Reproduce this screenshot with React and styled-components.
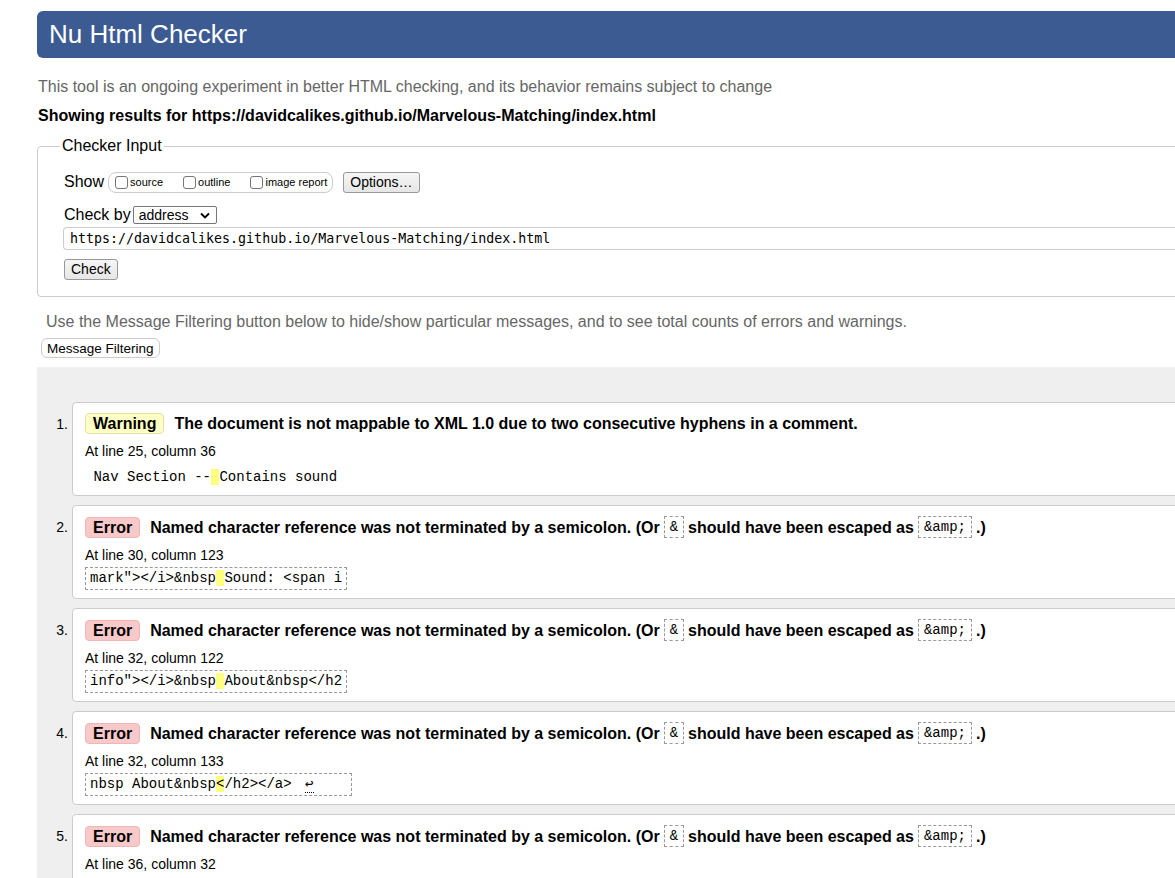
import React from "react";
import styled, { createGlobalStyle } from "styled-components";

const GlobalStyle = createGlobalStyle`
  html, body {
    margin: 0;
    padding: 0;
    background: #ffffff;
    overflow: hidden;
  }
  body {
    font-family: "Liberation Sans", Arial, sans-serif;
    color: #000000;
  }
`;

const Page = styled.div`
  width: 1320px;
  padding: 11px 0 0 37px;
  box-sizing: border-box;
`;

const Header = styled.h1`
  margin: 0;
  height: 47px;
  background: #3d5b93;
  border-radius: 6px;
  color: #ffffff;
  font-size: 26px;
  font-weight: normal;
  line-height: 47px;
  padding-left: 12px;
`;

const Intro = styled.p`
  margin: 19px 0 0 1px;
  font-size: 16px;
  line-height: 19px;
  color: #666666;
`;

const Results = styled.p`
  margin: 10px 0 0 1px;
  font-size: 16px;
  line-height: 19px;
  font-weight: bold;
`;

const Fieldset = styled.fieldset`
  margin: 12px 0 0 0;
  border: 1px solid #cccccc;
  border-radius: 4px;
  padding: 12px 0 15px 26px;
  height: 160px;
  box-sizing: border-box;
`;

const Legend = styled.legend`
  font-size: 16px;
  padding: 0 2px;
  margin-left: -4px;
  line-height: 18px;
`;

const FormRow = styled.div`
  display: flex;
  align-items: center;
  height: ${(p) => p.$h || 22}px;
  margin-top: ${(p) => p.$mt || 0}px;
`;

const Label = styled.span`
  font-size: 16px;
  margin-right: ${(p) => p.$mr || 4}px;
`;

const ShowGroup = styled.div`
  display: flex;
  align-items: center;
  height: 19px;
  border: 1px solid #cccccc;
  border-radius: 8px;
  padding: 0 5px 0 6px;
  margin-right: 10px;
`;

const CheckItem = styled.label`
  display: flex;
  align-items: center;
  font-size: 11px;
  margin-right: ${(p) => p.$mr || 0}px;
`;

const Box = styled.span`
  display: inline-block;
  width: 13px;
  height: 13px;
  box-sizing: border-box;
  border: 1px solid #767676;
  border-radius: 3px;
  margin-right: 2px;
  background: #ffffff;
`;

const Button = styled.button`
  font-family: "Liberation Sans", Arial, sans-serif;
  font-size: ${(p) => p.$fs || 14}px;
  height: ${(p) => p.$h || 21}px;
  padding: 0 ${(p) => p.$px || 6}px;
  border: 1px solid ${(p) => (p.$round ? "#cccccc" : "#999999")};
  border-radius: ${(p) => (p.$round ? 6 : 3)}px;
  background: ${(p) => (p.$round ? "#ffffff" : "linear-gradient(#f6f6f6, #e6e6e6)")};
  color: #000000;
`;

const Select = styled.div`
  display: flex;
  align-items: center;
  justify-content: space-between;
  width: 84px;
  height: 18px;
  box-sizing: border-box;
  border: 1px solid #767676;
  border-radius: 2px;
  padding: 0 6px 0 5px;
  font-size: 14px;
`;

const UrlInput = styled.div`
  flex: 1;
  height: 23px;
  box-sizing: border-box;
  border: 1px solid #cccccc;
  border-right: none;
  border-radius: 4px 0 0 4px;
  margin-left: -1px;
  padding-left: 6px;
  font-family: "DejaVu Sans Mono", monospace;
  font-size: 13.3px;
  line-height: 21px;
`;

const FilterNote = styled.p`
  margin: 15px 0 0 9px;
  font-size: 16px;
  line-height: 19px;
  color: #666666;
`;

const FilterRow = styled.div`
  margin: 7px 0 0 4px;
  display: flex;
`;

const ResultsArea = styled.div`
  margin-top: 9px;
  background: #efefef;
  padding: 35px 0 0 0;
  height: 511px;
  box-sizing: border-box;
  overflow: hidden;
`;

const List = styled.ol`
  list-style: none;
  margin: 0;
  padding: 0;
`;

const Item = styled.li`
  display: flex;
  margin-bottom: 9px;
`;

const Num = styled.span`
  width: 31px;
  flex-shrink: 0;
  text-align: right;
  font-size: 14px;
  padding-top: 14px;
  padding-right: 4px;
`;

const Card = styled.div`
  flex: 1;
  height: 94px;
  box-sizing: border-box;
  background: #ffffff;
  border: 1px solid #cccccc;
  border-radius: 4px;
  padding: 10px 0 0 12px;
`;

const MessageLine = styled.p`
  margin: 0;
  display: flex;
  align-items: center;
  font-size: 16px;
  font-weight: bold;
  line-height: 21px;
  white-space: nowrap;
`;

const Badge = styled.strong`
  display: inline-block;
  height: 21px;
  box-sizing: border-box;
  line-height: 19px;
  padding: 0 7px;
  margin-right: 10px;
  border-radius: 4px;
  border: 1px solid ${(p) => (p.$kind === "warning" ? "#e6e0a6" : "#eeb6b6")};
  background: ${(p) => (p.$kind === "warning" ? "#ffffc5" : "#f8c9c9")};
`;

const InlineCode = styled.code`
  display: inline-block;
  height: 22px;
  box-sizing: border-box;
  line-height: 20px;
  border: 1px dashed #999999;
  padding: 0 5px;
  margin: 0 4px;
  font-family: "Liberation Mono", "Courier New", monospace;
  font-size: 14px;
  font-weight: normal;
`;

const Location = styled.p`
  margin: 9px 0 0 0;
  font-size: 14px;
  line-height: 17px;
`;

const Extract = styled.p`
  margin: ${(p) => (p.$boxed ? 3 : 7)}px 0 0 0;
  display: inline-block;
  height: ${(p) => (p.$boxed ? 23 : 19)}px;
  box-sizing: border-box;
  border: ${(p) => (p.$boxed ? "1px dashed #999999" : "none")};
  padding: 0 ${(p) => (p.$boxed ? 4 : 0)}px;
  font-family: "Liberation Mono", "Courier New", monospace;
  font-size: 14px;
  line-height: 21px;
  white-space: pre;
`;

const Mark = styled.b`
  font-weight: normal;
  background: #ffff7f;
`;

const Lf = styled.span`
  border-bottom: 1px dotted #000000;
  margin-left: 5px;
`;

const namedRef = (
  <>
    Named character reference was not terminated by a semicolon. (Or
    <InlineCode>&amp;</InlineCode>should have been escaped as
    <InlineCode>&amp;amp;</InlineCode>.)
  </>
);

const messages = [
  {
    kind: "warning",
    label: "Warning",
    text: "The document is not mappable to XML 1.0 due to two consecutive hyphens in a comment.",
    loc: "At line 25, column 36",
    extract: [" Nav Section --", " ", "Contains sound"],
  },
  {
    kind: "error",
    label: "Error",
    text: namedRef,
    loc: "At line 30, column 123",
    boxed: true,
    extract: ['mark"></i>&nbsp', " ", "Sound: <span i"],
  },
  {
    kind: "error",
    label: "Error",
    text: namedRef,
    loc: "At line 32, column 122",
    boxed: true,
    extract: ['info"></i>&nbsp', " ", "About&nbsp</h2"],
  },
  {
    kind: "error",
    label: "Error",
    text: namedRef,
    loc: "At line 32, column 133",
    boxed: true,
    extract: ["nbsp About&nbsp", "<", "/h2></a>"],
    lf: true,
  },
  {
    kind: "error",
    label: "Error",
    text: namedRef,
    loc: "At line 36, column 32",
    boxed: true,
    extract: null,
  },
];

function App() {
  return (
    <>
      <GlobalStyle />
      <Page>
        <Header>Nu Html Checker</Header>
        <Intro>
          This tool is an ongoing experiment in better HTML checking, and its
          behavior remains subject to change
        </Intro>
        <Results>
          Showing results for
          https://davidcalikes.github.io/Marvelous-Matching/index.html
        </Results>

        <Fieldset>
          <Legend>Checker Input</Legend>
          <FormRow $mt={4}>
            <Label $mr={4}>Show</Label>
            <ShowGroup>
              <CheckItem $mr={20}>
                <Box />
                source
              </CheckItem>
              <CheckItem $mr={20}>
                <Box />
                outline
              </CheckItem>
              <CheckItem>
                <Box />
                image report
              </CheckItem>
            </ShowGroup>
            <Button>Options…</Button>
          </FormRow>
          <FormRow $mt={11}>
            <Label $mr={2}>Check by</Label>
            <Select>
              address
              <svg width="10" height="7" viewBox="0 0 10 7">
                <path d="M1 1.5 L5 5.5 L9 1.5" fill="none" stroke="#000" strokeWidth="1.8" />
              </svg>
            </Select>
          </FormRow>
          <FormRow $h={23} $mt={1}>
            <UrlInput>
              https://davidcalikes.github.io/Marvelous-Matching/index.html
            </UrlInput>
          </FormRow>
          <FormRow $mt={8}>
            <Button>Check</Button>
          </FormRow>
        </Fieldset>

        <FilterNote>
          Use the Message Filtering button below to hide/show particular
          messages, and to see total counts of errors and warnings.
        </FilterNote>
        <FilterRow>
          <Button $round $h={20} $px={5} $fs={13.5}>
            Message Filtering
          </Button>
        </FilterRow>

        <ResultsArea>
          <List>
            {messages.map((m, i) => (
              <Item key={i}>
                <Num>{i + 1}.</Num>
                <Card>
                  <MessageLine>
                    <Badge $kind={m.kind}>{m.label}</Badge>
                    {m.text}
                  </MessageLine>
                  <Location>{m.loc}</Location>
                  {m.extract && (
                    <Extract $boxed={m.boxed}>
                      {m.extract[0]}
                      <Mark>{m.extract[1]}</Mark>
                      {m.extract[2]}
                      {m.lf && (
                        <>
                          {" "}
                          <Lf>↩</Lf>
                          {"    "}
                        </>
                      )}
                    </Extract>
                  )}
                </Card>
              </Item>
            ))}
          </List>
        </ResultsArea>
      </Page>
    </>
  );
}

export default App;
